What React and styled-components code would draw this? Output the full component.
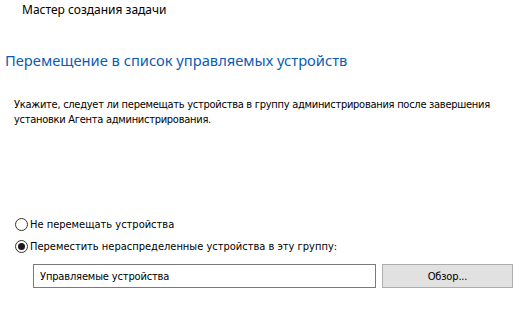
import React from "react";
import { styled, createGlobalStyle } from "styled-components";

const Global = createGlobalStyle`
    html, body {
        margin: 0;
        padding: 0;
        background: #ffffff;
    }
`;

const Page = styled.div`
    width: 519px;
    height: 328px;
    background: #ffffff;
    display: flex;
    flex-direction: column;
    font-family: "Noto Sans", "Open Sans", sans-serif;
    color: #000;
`;

const WizardTitle = styled.div`
    padding: 2px 0 0 22px;
    font-size: 12px;
    line-height: 16px;
`;

const Heading = styled.h1`
    margin: 32px 0 0 5px;
    font-size: 14.7px;
    font-weight: 400;
    line-height: 20px;
    color: #0b5cb5;
`;

const Hint = styled.p`
    margin: 27px 0 0 14px;
    width: 495px;
    font-family: "DejaVu Sans Condensed", "DejaVu Sans", Tahoma, sans-serif;
    font-stretch: semi-condensed;
    font-size: 11px;
    line-height: 15px;
    letter-spacing: -0.27px;
`;

const Options = styled.div`
    margin: 90px 0 0 15px;
    display: flex;
    flex-direction: column;
    gap: 8px;
`;

const Option = styled.label`
    display: flex;
    align-items: center;
    gap: 2px;
    height: 14px;
    font-family: "DejaVu Sans Condensed", "DejaVu Sans", Tahoma, sans-serif;
    font-stretch: semi-condensed;
    font-size: 11px;
`;

const Radio = styled.span`
    width: 11px;
    height: 11px;
    border: 1px solid #333;
    border-radius: 50%;
    display: flex;
    align-items: center;
    justify-content: center;
    flex-shrink: 0;

    &::after {
        content: "";
        width: 7px;
        height: 7px;
        border-radius: 50%;
        background: ${(p) => (p.$checked ? "#1a1a1a" : "transparent")};
    }
`;

const PickRow = styled.div`
    margin: 11px 0 0 33px;
    display: flex;
    gap: 6px;
`;

const Field = styled.div`
    width: 335px;
    height: 22px;
    border: 1px solid #7a7a7a;
    padding-left: 6px;
    display: flex;
    align-items: center;
    font-family: "DejaVu Sans Condensed", "DejaVu Sans", Tahoma, sans-serif;
    font-stretch: semi-condensed;
    font-size: 11px;
    letter-spacing: -0.15px;
`;

const Button = styled.button`
    width: 131px;
    height: 24px;
    border: 1px solid #adadad;
    background: #e1e1e1;
    font-family: "DejaVu Sans Condensed", "DejaVu Sans", Tahoma, sans-serif;
    font-stretch: semi-condensed;
    font-size: 11px;
    letter-spacing: -0.15px;
    color: #000;
    padding: 0;
`;

const App = () => {
    return (
        <Page>
            <Global />
            <WizardTitle>Мастер создания задачи</WizardTitle>
            <Heading>Перемещение в список управляемых устройств</Heading>
            <Hint>
                Укажите, следует ли перемещать устройства в группу
                администрирования после завершения установки Агента
                администрирования.
            </Hint>
            <Options>
                <Option>
                    <Radio />
                    Не перемещать устройства
                </Option>
                <Option>
                    <Radio $checked />
                    Переместить нераспределенные устройства в эту группу:
                </Option>
            </Options>
            <PickRow>
                <Field>Управляемые устройства</Field>
                <Button>Обзор...</Button>
            </PickRow>
        </Page>
    );
};

export default App;
